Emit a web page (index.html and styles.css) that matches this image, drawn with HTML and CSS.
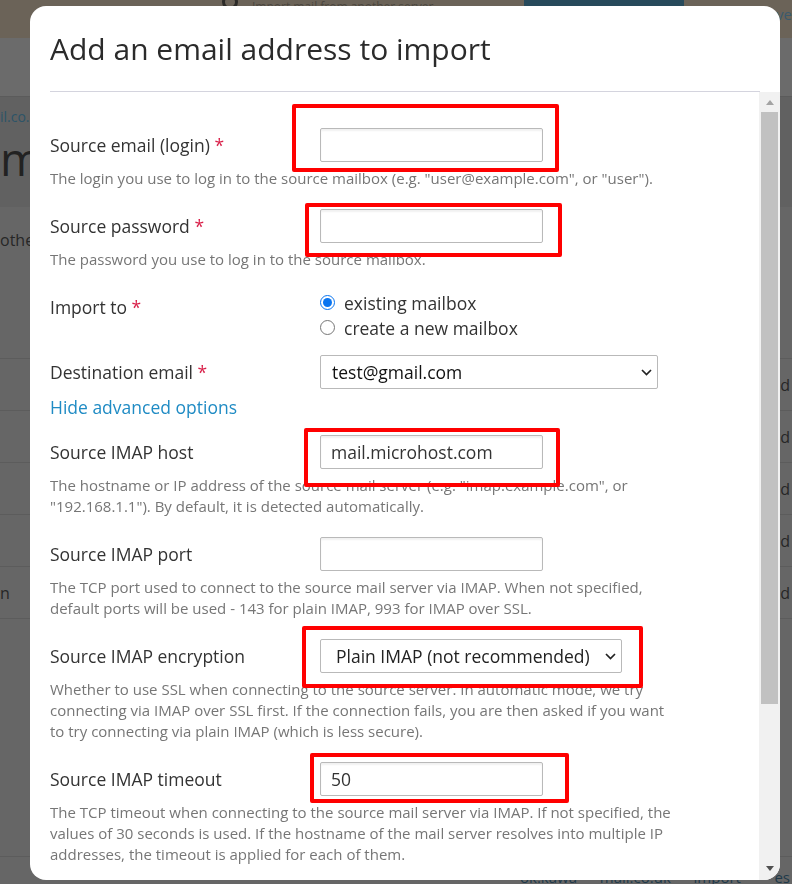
FILE: index.html
```html
<!DOCTYPE html>
<html lang="en">
<head>
<meta charset="utf-8">
<title>Add an email address to import</title>
<link rel="stylesheet" href="styles.css">
</head>
<body>
<div class="page">
  <div class="topbar">
    <div class="tb-note"><span class="tb-icon"></span><span class="tb-text">Import mail from another server</span></div>
    <div class="tb-btn"></div>
    <div class="tb-more">Leave</div>
  </div>
  <div class="subbar"></div>
  <div class="pagehead">
    <div class="crumb">il.co.uk</div>
    <div class="ph-title">mail</div>
  </div>
  <div class="intro">other</div>
  <div class="table">
    <div class="trow"><span></span><span class="rc">d</span></div>
    <div class="trow"><span></span><span class="rc">d</span></div>
    <div class="trow"><span></span><span class="rc">d</span></div>
    <div class="trow"><span></span><span class="rc">d</span></div>
    <div class="trow"><span class="lc">n</span><span class="rc">d</span></div>
    <div class="tblock"></div>
    <div class="trow foot"><span class="ft">ok.kawa — mail.co.uk — import</span><span class="rc ftb">es</span></div>
  </div>
</div>

<div class="modal">
  <div class="modal-head">
    <h2 class="modal-title">Add an email address to import</h2>
  </div>
  <div class="modal-body">
    <div class="form">
      <div class="field">
        <div class="row"><label class="lbl">Source email (login) <span class="req">*</span></label><input class="inp" type="text"></div>
        <div class="desc">The login you use to log in to the source mailbox (e.g. "user@example.com", or "user").</div>
      </div>
      <div class="field">
        <div class="row"><label class="lbl">Source password <span class="req">*</span></label><input class="inp" type="password"></div>
        <div class="desc">The password you use to log in to the source mailbox.</div>
      </div>
      <div class="field radios-field">
        <div class="row"><label class="lbl">Import to <span class="req">*</span></label>
          <div class="radios">
            <label class="radio"><input type="radio" name="to" checked><span>existing mailbox</span></label>
            <label class="radio"><input type="radio" name="to"><span>create a new mailbox</span></label>
          </div>
        </div>
      </div>
      <div class="field dest-field">
        <div class="row"><label class="lbl">Destination email <span class="req">*</span></label>
          <div class="selwrap sel-dest">
            <select class="sel"><option>test@gmail.com</option></select>
            <svg class="chev" width="11" height="7" viewBox="0 0 11 7"><path d="M1 1l4.5 4.5L10 1" fill="none" stroke="#222" stroke-width="1.7"/></svg>
          </div>
        </div>
      </div>
      <a class="adv" href="#">Hide advanced options</a>
      <div class="field">
        <div class="row"><label class="lbl">Source IMAP host</label><input class="inp" type="text" value="mail.microhost.com"></div>
        <div class="desc">The hostname or IP address of the source mail server (e.g. "imap.example.com", or "192.168.1.1"). By default, it is detected automatically.</div>
      </div>
      <div class="field">
        <div class="row"><label class="lbl">Source IMAP port</label><input class="inp" type="text"></div>
        <div class="desc">The TCP port used to connect to the source mail server via IMAP. When not specified, default ports will be used - 143 for plain IMAP, 993 for IMAP over SSL.</div>
      </div>
      <div class="field">
        <div class="row"><label class="lbl">Source IMAP encryption</label>
          <div class="selwrap sel-enc">
            <select class="sel"><option>Plain IMAP (not recommended)</option></select>
            <svg class="chev" width="11" height="7" viewBox="0 0 11 7"><path d="M1 1l4.5 4.5L10 1" fill="none" stroke="#222" stroke-width="1.7"/></svg>
          </div>
        </div>
        <div class="desc">Whether to use SSL when connecting to the source server. In automatic mode, we try connecting via IMAP over SSL first. If the connection fails, you are then asked if you want to try connecting via plain IMAP (which is less secure).</div>
      </div>
      <div class="field">
        <div class="row"><label class="lbl">Source IMAP timeout</label><input class="inp" type="text" value="50"></div>
        <div class="desc">The TCP timeout when connecting to the source mail server via IMAP. If not specified, the values of 30 seconds is used. If the hostname of the mail server resolves into multiple IP addresses, the timeout is applied for each of them.</div>
      </div>
    </div>
    <div class="scrollbar">
      <div class="sb-btn"><span class="arr-up"></span></div>
      <div class="sb-thumb"></div>
      <div class="sb-rest"></div>
      <div class="sb-btn"><span class="arr-down"></span></div>
    </div>
  </div>
</div>

<div class="mark m1"></div>
<div class="mark m2"></div>
<div class="mark m3"></div>
<div class="mark m4"></div>
<div class="mark m5"></div>
</body>
</html>
```

FILE: styles.css
```css
* { box-sizing: border-box; }

html, body {
  margin: 0;
  padding: 0;
}

body {
  width: 792px;
  height: 884px;
  overflow: hidden;
  background: #666666;
  font-family: "Open Sans", "Noto Sans", sans-serif;
  color: #333;
}

/* ---------- dimmed page behind the dialog ---------- */
.page {
  width: 792px;
}

.topbar {
  height: 38px;
  background: #6b6358;
  display: flex;
  align-items: flex-start;
}

.tb-note {
  width: 524px;
  display: flex;
  align-items: flex-start;
  padding-left: 222px;
  font-size: 12px;
  line-height: 14px;
  color: #4a463f;
}

.tb-icon {
  width: 16px;
  height: 16px;
  margin-top: -6px;
  border: 3px solid #2c2b28;
  border-radius: 50%;
}

.tb-text {
  margin-left: 14px;
}

.tb-btn {
  width: 160px;
  height: 38px;
  background: #274a5b;
}

.tb-more {
  flex: 1;
  text-align: right;
  font-size: 15px;
  line-height: 20px;
  color: #3a5a6d;
  padding-top: 4px;
}

.subbar {
  height: 59px;
  background: #6b6b6b;
  border-bottom: 1px solid #5b5b5b;
}

.pagehead {
  height: 110px;
  background: #616161;
  padding-top: 10px;
}

.crumb {
  font-size: 14px;
  line-height: 20px;
  color: #2c5468;
}

.ph-title {
  font-size: 46px;
  line-height: 50px;
  color: #222;
  margin-top: 6px;
}

.intro {
  height: 151px;
  padding-top: 22px;
  font-size: 16px;
  line-height: 22px;
  color: #262626;
}

.trow {
  height: 52px;
  border-top: 1px solid #5c5c5c;
  display: flex;
  justify-content: space-between;
  align-items: center;
  font-size: 16px;
  color: #262626;
}

.rc { padding-right: 2px; }

.tblock {
  height: 238px;
  border-top: 1px solid #5c5c5c;
}

.trow.foot {
  height: 30px;
  align-items: flex-end;
  font-size: 15px;
  line-height: 18px;
  color: #1f3a4a;
}

.ft { padding-left: 520px; }

/* ---------- dialog ---------- */
.modal {
  position: fixed;
  left: 30px;
  top: 6px;
  width: 750px;
  height: 874px;
  background: #fff;
  border-radius: 16px;
  overflow: hidden;
  display: flex;
  flex-direction: column;
}

.modal-head {
  margin: 0 20px;
  padding: 23px 0 22px;
  border-bottom: 1px solid #d4d4de;
}

.modal-title {
  margin: 0;
  font-size: 30px;
  line-height: 40px;
  font-weight: 400;
  color: #2b2b2b;
}

.modal-body {
  flex: 1;
  display: flex;
  min-height: 0;
}

.form {
  flex: 1;
  overflow: hidden;
  padding: 36px 0 0 20px;
}

.field {
  margin-bottom: 20px;
}

.row {
  display: flex;
  align-items: flex-start;
}

.lbl {
  width: 270px;
  flex: none;
  font-size: 17.5px;
  line-height: 34px;
  color: #333;
}

.req {
  color: #d9214a;
}

.inp {
  width: 223px;
  height: 34px;
  border: 1px solid #b9b9b9;
  border-radius: 2px;
  padding: 0 10px;
  font-family: "Open Sans", sans-serif;
  font-size: 17.5px;
  color: #333;
  background: #fff;
  box-shadow: inset 0 2px 2px rgba(0, 0, 0, 0.06);
  outline: none;
}

.desc {
  margin-top: 6px;
  max-width: 632px;
  font-size: 15px;
  line-height: 21px;
  color: #767676;
}

.radios-field { margin-bottom: 15px; }

.radios {
  display: flex;
  flex-direction: column;
}

.radio {
  display: flex;
  align-items: center;
  height: 25px;
  font-size: 17.5px;
  color: #333;
}

.radio input {
  width: 15px;
  height: 15px;
  margin: 0 9px 0 0;
  accent-color: #0a75f0;
}

.dest-field { margin-bottom: 8px; }

.selwrap {
  position: relative;
  display: block;
}

.sel {
  appearance: none;
  -webkit-appearance: none;
  height: 34px;
  border: 1px solid #b9b9b9;
  border-radius: 2px;
  background: #fff;
  font-family: "Open Sans", sans-serif;
  font-size: 17.5px;
  color: #111;
  outline: none;
}

.sel-dest .sel {
  width: 338px;
  padding: 0 30px 0 11px;
}

.sel-enc .sel {
  width: 302px;
  padding: 0 24px 0 15px;
  color: #222;
}

.chev {
  position: absolute;
  right: 6px;
  top: 14px;
}

.adv {
  display: block;
  width: max-content;
  font-size: 17.5px;
  line-height: 20px;
  color: #1f8bc4;
  text-decoration: none;
  margin-bottom: 18px;
}

/* ---------- scrollbar ---------- */
.scrollbar {
  width: 21px;
  flex: none;
  background: #f1f1f1;
  display: flex;
  flex-direction: column;
}

.sb-btn {
  height: 20px;
  display: flex;
  align-items: center;
  justify-content: center;
}

.arr-up {
  width: 0;
  height: 0;
  border-left: 4.5px solid transparent;
  border-right: 4.5px solid transparent;
  border-bottom: 5px solid #a3a3a3;
}

.arr-down {
  width: 0;
  height: 0;
  border-left: 4.5px solid transparent;
  border-right: 4.5px solid transparent;
  border-top: 5px solid #505050;
  margin-top: -4px;
}

.sb-thumb {
  height: 592px;
  margin: 0 2px;
  background: #c1c1c1;
}

.sb-rest { flex: 1; }

/* ---------- red annotation boxes ---------- */
.mark {
  position: fixed;
  border: 4px solid #ff0000;
  border-radius: 2px;
}

.m1 { left: 292px; top: 104px; width: 267px; height: 68px; }
.m2 { left: 305px; top: 203px; width: 257px; height: 54px; }
.m3 { left: 304px; top: 428px; width: 256px; height: 59px; }
.m4 { left: 302px; top: 626px; width: 341px; height: 62px; }
.m5 { left: 310px; top: 753px; width: 259px; height: 50px; }
```
